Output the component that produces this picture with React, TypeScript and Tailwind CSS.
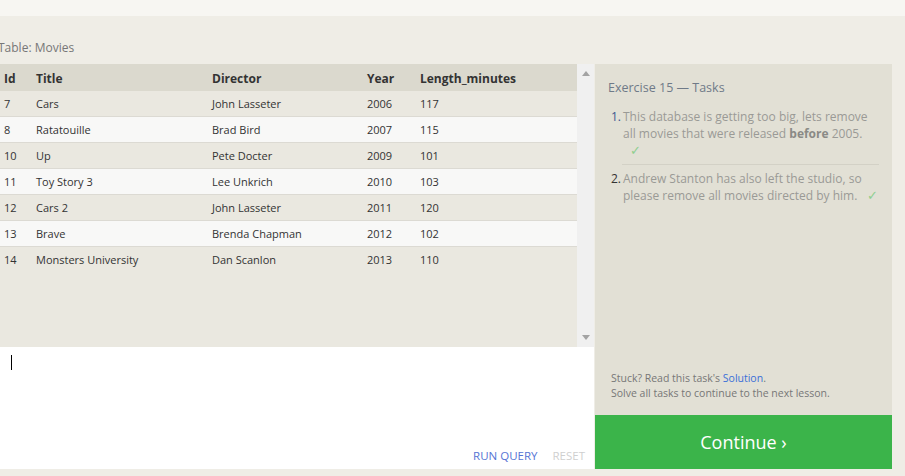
import React from "react";

const rows = [
  { id: 7, title: "Cars", director: "John Lasseter", year: 2006, len: 117 },
  { id: 8, title: "Ratatouille", director: "Brad Bird", year: 2007, len: 115 },
  { id: 10, title: "Up", director: "Pete Docter", year: 2009, len: 101 },
  { id: 11, title: "Toy Story 3", director: "Lee Unkrich", year: 2010, len: 103 },
  { id: 12, title: "Cars 2", director: "John Lasseter", year: 2011, len: 120 },
  { id: 13, title: "Brave", director: "Brenda Chapman", year: 2012, len: 102 },
  { id: 14, title: "Monsters University", director: "Dan Scanlon", year: 2013, len: 110 },
];

const cols = "grid grid-cols-[32px_176px_155px_53px_1fr]";

const Check = () => <span className="text-[#8fcf8f] text-[13px]">✓</span>;

const App = () => {
  return (
    <div
      className="w-[905px] h-[476px] overflow-hidden bg-[#efede6] text-[#333]"
      style={{ fontFamily: '"Open Sans", "Noto Sans", sans-serif' }}
    >
      <div className="h-4 bg-[#f7f6f2]" />
      <div className="h-12 flex items-end pb-[8px] -ml-[2px] text-[12px] leading-4 text-[#777]">
        Table: Movies
      </div>

      <div className="flex gap-[1px]">
        <div className="w-[594px] flex flex-col">
          <div className="h-[283px] flex">
            <div className="flex-1 bg-[#eae8e0] text-[11px]">
              <div className={`${cols} h-[27px] items-center pt-[2px] bg-[#dbd9ce] font-bold text-[12px] text-[#333]`}>
                <div className="pl-1">Id</div>
                <div className="pl-1">Title</div>
                <div className="pl-1">Director</div>
                <div className="pl-1">Year</div>
                <div className="pl-1">Length_minutes</div>
              </div>
              {rows.map((r, i) => (
                <div
                  key={r.id}
                  className={`${cols} h-[26px] items-center pt-[1px] border-b border-[#dcdad3] ${
                    i % 2 === 0 ? "bg-[#eae8e0]" : "bg-[#f8f8f7]"
                  } ${i === rows.length - 1 ? "border-b-0" : ""}`}
                >
                  <div className="pl-1">{r.id}</div>
                  <div className="pl-1">{r.title}</div>
                  <div className="pl-1">{r.director}</div>
                  <div className="pl-1">{r.year}</div>
                  <div className="pl-1">{r.len}</div>
                </div>
              ))}
            </div>
            <div className="w-[17px] bg-[#f0f0f0] flex flex-col justify-between items-center py-[7px]">
              <svg width="8" height="5" viewBox="0 0 8 5">
                <polygon points="4,0 8,5 0,5" fill="#a3a3a3" />
              </svg>
              <svg width="8" height="5" viewBox="0 0 8 5">
                <polygon points="0,0 8,0 4,5" fill="#a3a3a3" />
              </svg>
            </div>
          </div>
          <div className="h-[122px] bg-white flex flex-col">
            <div className="pl-[11px] pt-[8px]">
              <div className="w-[1px] h-[15px] bg-black" />
            </div>
            <div className="mt-auto flex justify-end gap-[15px] pr-[9px] pb-[5px] text-[11.5px] leading-4">
              <span className="text-[#5574d4]">RUN QUERY</span>
              <span className="text-[#cfcfcf]">RESET</span>
            </div>
          </div>
        </div>

        <div className="w-[297px] flex flex-col">
          <div className="h-[351px] bg-[#e2e0d5] flex flex-col px-[13px]">
            <div className="pt-[14px] text-[12.5px] leading-5 text-[#6f7a88]">Exercise 15 — Tasks</div>
            <ol className="mt-[10px] text-[12px] leading-[17px] text-[#9a9a96]">
              <li className="flex pb-[5px]">
                <span className="w-[14px] text-[#3c5890] pl-[3px]">1.</span>
                <span className="flex-1 pl-[1px]">
                  This database is getting too big, lets remove all movies that were released{" "}
                  <b className="text-[#8a8a86]">before</b> 2005.
                  <br />
                  <span className="pl-[7px]">
                    <Check />
                  </span>
                </span>
              </li>
              <li className="flex ml-[14px] border-t border-[#d3d1c6] pt-[5px]">
                <span className="w-[14px] -ml-[14px] text-[#333] pl-[3px]">2.</span>
                <span className="flex-1 pl-[1px]">
                  Andrew Stanton has also left the studio, so please remove all movies directed by him.
                  <span className="pl-[10px]">
                    <Check />
                  </span>
                </span>
              </li>
            </ol>
            <div className="mt-auto pb-[14px] pl-[3px] text-[10.5px] leading-[15px] text-[#777]">
              <div>
                Stuck? Read this task's <span className="text-[#3a6fd8]">Solution</span>.
              </div>
              <div>Solve all tasks to continue to the next lesson.</div>
            </div>
          </div>
          <div className="h-[54px] bg-[#3bb44a] flex items-center justify-center text-white text-[18px]">
            Continue ›
          </div>
        </div>
      </div>
    </div>
  );
};

export default App;
